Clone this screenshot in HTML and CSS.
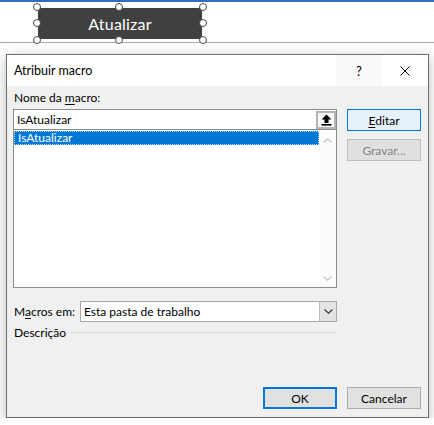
FILE: index.html
```html
<!DOCTYPE html>
<html lang="pt">
<head>
    <meta charset="UTF-8">
    <meta name="viewport" content="width=device-width, initial-scale=1.0">
    <title>Atribuir macro</title>
    <link rel="stylesheet" href="styles.css">
</head>
<body>
    <div class="ribbon-edge"></div>

    <div class="sheet">
        <div class="shape">
            <span class="shape-text">Atualizar</span>
            <i class="handle h-tl"></i>
            <i class="handle h-tc"></i>
            <i class="handle h-tr"></i>
            <i class="handle h-ml"></i>
            <i class="handle h-mr"></i>
            <i class="handle h-bl"></i>
            <i class="handle h-bc"></i>
            <i class="handle h-br"></i>
        </div>
    </div>

    <div class="dialog">
        <div class="titlebar">
            <span class="title">Atribuir macro</span>
            <div class="caption-btns">
                <span class="cap help">?</span>
                <span class="cap close">
                    <svg width="10" height="10" viewBox="0 0 10 10">
                        <path d="M0.5 0.5 L9.5 9.5 M9.5 0.5 L0.5 9.5" stroke="#000" stroke-width="1" fill="none"/>
                    </svg>
                </span>
            </div>
        </div>

        <div class="dialog-body">
            <div class="main">
                <div class="left">
                    <div class="label">Nome da <u>m</u>acro:</div>
                    <div class="name-row">
                        <span class="name-value">IsAtualizar</span>
                        <span class="collapse-btn">
                            <svg width="11" height="12" viewBox="0 0 11 12">
                                <path d="M5.5 0.5 L10.5 5.5 L7.5 5.5 L7.5 9 L3.5 9 L3.5 5.5 L0.5 5.5 Z" fill="#000"/>
                                <rect x="0.5" y="10" width="10" height="1.6" fill="#000"/>
                            </svg>
                        </span>
                    </div>
                    <div class="macro-list">
                        <div class="items">
                            <div class="item selected">IsAtualizar</div>
                        </div>
                        <div class="vscroll">
                            <svg width="9" height="5" viewBox="0 0 9 5">
                                <path d="M0.5 4.5 L4.5 0.8 L8.5 4.5" stroke="#c6c6c6" stroke-width="1.2" fill="none"/>
                            </svg>
                            <svg width="9" height="5" viewBox="0 0 9 5">
                                <path d="M0.5 0.5 L4.5 4.2 L8.5 0.5" stroke="#c6c6c6" stroke-width="1.2" fill="none"/>
                            </svg>
                        </div>
                    </div>
                    <div class="location-row">
                        <span class="location-label">M<u>a</u>cros em:</span>
                        <div class="combo">
                            <span class="combo-value">Esta pasta de trabalho</span>
                            <span class="combo-drop">
                                <svg width="9" height="5" viewBox="0 0 9 5">
                                    <path d="M0.5 0.5 L4.5 4.2 L8.5 0.5" stroke="#333" stroke-width="1.1" fill="none"/>
                                </svg>
                            </span>
                        </div>
                    </div>
                    <div class="group">
                        <span>Descrição</span>
                        <span class="rule"></span>
                    </div>
                </div>

                <div class="side">
                    <span class="btn primary"><u>E</u>ditar</span>
                    <span class="btn disabled">Gravar...</span>
                </div>
            </div>

            <div class="footer">
                <span class="btn default">OK</span>
                <span class="btn">Cancelar</span>
            </div>
        </div>
    </div>
</body>
</html>
```

FILE: styles.css
```css
body {
    margin: 0;
    background: #fff;
    font-family: Lato, "Segoe UI", sans-serif;
    font-size: 12px;
    color: #000;
    overflow: hidden;
}

u {
    text-decoration-thickness: 1px;
    text-underline-offset: 2px;
}

/* Excel window: ribbon edge + worksheet strip */
.ribbon-edge {
    height: 2px;
    background: #2b6fbd;
}

.sheet {
    height: 34px;
    padding: 6px 0 0 38px;
    border-bottom: 1px solid #a6a6a6;
}

.shape {
    position: relative;
    width: 164px;
    height: 31px;
    background: #404040;
    display: flex;
    justify-content: center;
    align-items: center;
}

.shape-text {
    font-family: Lato, "Noto Sans", sans-serif;
    font-size: 16px;
    color: #fff;
    letter-spacing: 0.2px;
}

.handle {
    position: absolute;
    width: 6px;
    height: 6px;
    border-radius: 50%;
    background: #fff;
    border: 1.6px solid #4a4a4a;
}

.h-tl, .h-tc, .h-tr { top: -5px; }
.h-ml, .h-mr { top: 11px; }
.h-bl, .h-bc, .h-br { bottom: -5px; }
.h-tl, .h-ml, .h-bl { left: -5px; }
.h-tc, .h-bc { left: 77px; }
.h-tr, .h-mr, .h-br { right: -5px; }

/* Dialog */
.dialog {
    box-sizing: border-box;
    margin: 11px 0 0 6px;
    width: 423px;
    height: 364px;
    border: 1px solid #6e6e6e;
    background: #f0f0f0;
    box-shadow: 0 3px 12px rgba(0, 0, 0, 0.28);
    display: flex;
    flex-direction: column;
}

.titlebar {
    height: 31px;
    flex-shrink: 0;
    background: #fff;
    display: flex;
    align-items: center;
}

.title {
    padding-left: 7px;
    font-size: 12.5px;
}

.caption-btns {
    margin-left: auto;
    display: flex;
    height: 100%;
}

.cap {
    width: 46px;
    height: 100%;
    display: flex;
    justify-content: center;
    align-items: center;
}

.cap.help {
    background: #fafafa;
    font-size: 13px;
}

.dialog-body {
    flex: 1;
    display: flex;
    flex-direction: column;
    padding: 4px 7px 8px 6px;
}

.main {
    display: flex;
    gap: 10px;
}

.left {
    width: 324px;
    display: flex;
    flex-direction: column;
}

.label {
    height: 16px;
    line-height: 16px;
    padding-left: 1px;
}

.name-row {
    box-sizing: border-box;
    margin-top: 3px;
    height: 20px;
    background: #fff;
    border: 1px solid #8c8c8c;
    border-bottom: none;
    display: flex;
    align-items: center;
}

.name-value {
    flex: 1;
    padding-left: 3px;
}

.collapse-btn {
    box-sizing: border-box;
    width: 20px;
    height: 18px;
    margin-top: 1px;
    border: 2px solid #b4b4b4;
    background: #f8f8f8;
    display: flex;
    justify-content: center;
    align-items: center;
}

.macro-list {
    box-sizing: border-box;
    height: 159px;
    background: #fff;
    border: 1px solid #8c8c8c;
    display: flex;
}

.items {
    flex: 1;
    padding-top: 1px;
}

.item {
    box-sizing: border-box;
    height: 14px;
    line-height: 12px;
    padding-left: 3px;
}

.item.selected {
    background: #0078d7;
    color: #fff;
    border: 1px dotted rgba(255, 255, 255, 0.7);
}

.vscroll {
    width: 17px;
    background: #fcfcfc;
    display: flex;
    flex-direction: column;
    justify-content: space-between;
    align-items: center;
    padding: 8px 0 6px;
}

.location-row {
    margin-top: 13px;
    display: flex;
    align-items: center;
}

.location-label {
    width: 66px;
    padding-left: 1px;
}

.combo {
    box-sizing: border-box;
    flex: 1;
    height: 21px;
    background: #fff;
    border: 1px solid #a8a8a8;
    display: flex;
    align-items: center;
}

.combo-value {
    flex: 1;
    padding-left: 3px;
}

.combo-drop {
    box-sizing: border-box;
    width: 17px;
    height: 100%;
    background: #e3e3e3;
    border-left: 1px solid #bcbcbc;
    display: flex;
    justify-content: center;
    align-items: center;
}

.group {
    margin-top: 2px;
    height: 16px;
    display: flex;
    align-items: center;
    padding-left: 1px;
}

.rule {
    flex: 1;
    height: 1px;
    background: #d8d8d8;
    margin: 0 1px 0 5px;
}

.side {
    width: 74px;
    padding-top: 19px;
    display: flex;
    flex-direction: column;
    gap: 8px;
}

.btn {
    box-sizing: border-box;
    width: 74px;
    height: 22px;
    background: #e1e1e1;
    border: 1px solid #adadad;
    display: flex;
    justify-content: center;
    align-items: center;
}

.btn.primary {
    background: #e5f1fb;
    border-color: #0078d7;
}

.btn.disabled {
    background: #e0e0e0;
    border-color: #bfbfbf;
    color: #838383;
}

.btn.default {
    border: 2px solid #0078d7;
}

.footer {
    margin-top: auto;
    display: flex;
    justify-content: flex-end;
    gap: 10px;
}
```
